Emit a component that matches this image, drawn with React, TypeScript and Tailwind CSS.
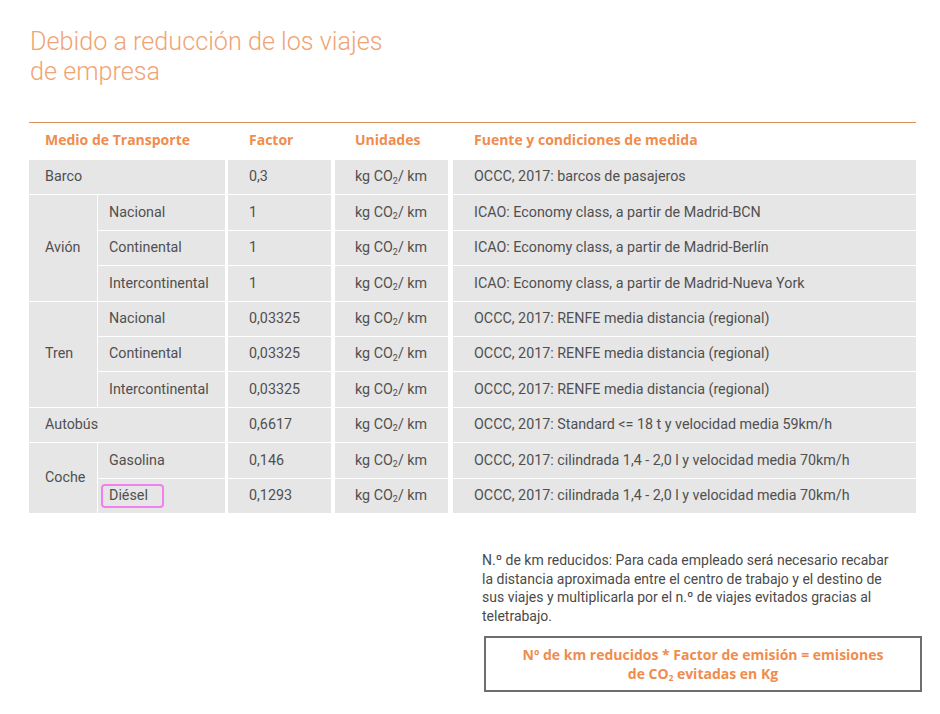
import type { ReactNode } from 'react'

const orange = 'text-[#ef8c4e]'

function Co2() {
  return (
    <span>
      kg CO<sub className="text-[9px]">2</sub>/ km
    </span>
  )
}

function Cell({ className, children }: { className: string; children?: ReactNode }) {
  return <div className={`flex items-center bg-[#e6e6e6] text-[14.3px] text-[#505050] ${className}`}>{children}</div>
}

type Fila = { row: string; factor: string; fuente: string }

const filas: Fila[] = [
  { row: 'row-start-1', factor: '0,3', fuente: 'OCCC, 2017: barcos de pasajeros' },
  { row: 'row-start-2', factor: '1', fuente: 'ICAO: Economy class, a partir de Madrid-BCN' },
  { row: 'row-start-3', factor: '1', fuente: 'ICAO: Economy class, a partir de Madrid-Berlín' },
  { row: 'row-start-4', factor: '1', fuente: 'ICAO: Economy class, a partir de Madrid-Nueva York' },
  { row: 'row-start-5', factor: '0,03325', fuente: 'OCCC, 2017: RENFE media distancia (regional)' },
  { row: 'row-start-6', factor: '0,03325', fuente: 'OCCC, 2017: RENFE media distancia (regional)' },
  { row: 'row-start-7', factor: '0,03325', fuente: 'OCCC, 2017: RENFE media distancia (regional)' },
  { row: 'row-start-8', factor: '0,6617', fuente: 'OCCC, 2017: Standard <= 18 t y velocidad media 59km/h' },
  { row: 'row-start-9', factor: '0,146', fuente: 'OCCC, 2017: cilindrada 1,4 - 2,0 l y velocidad media 70km/h' },
  { row: 'row-start-10', factor: '0,1293', fuente: 'OCCC, 2017: cilindrada 1,4 - 2,0 l y velocidad media 70km/h' },
]

const subs = [
  { row: 'row-start-2', label: 'Nacional' },
  { row: 'row-start-3', label: 'Continental' },
  { row: 'row-start-4', label: 'Intercontinental' },
  { row: 'row-start-5', label: 'Nacional' },
  { row: 'row-start-6', label: 'Continental' },
  { row: 'row-start-7', label: 'Intercontinental' },
  { row: 'row-start-9', label: 'Gasolina' },
]

const cols = 'grid grid-cols-[68px_1px_127px_3px_103px_4px_113px_5px_463px]'

export default function App() {
  return (
    <div className="relative h-[714px] w-[940px] bg-white font-['Roboto',sans-serif]">
      <h1 className="pl-[30px] pt-[27px] text-[25.2px] leading-[30px] font-light text-[#f0a474]">
        Debido a reducción de los viajes
        <br />
        de empresa
      </h1>

      <div className="ml-[29px] mt-[35px] w-[887px]">
        <div
          className={`${cols} h-[38px] items-center border-t border-[#dd8f5a] pb-[4px] font-['Open_Sans',sans-serif] text-[14px] font-bold ${orange}`}
        >
          <div className="col-span-3 col-start-1 pl-4">Medio de Transporte</div>
          <div className="col-start-5 pl-[21px]">Factor</div>
          <div className="col-start-7 pl-5">Unidades</div>
          <div className="col-start-9 pl-[21px]">Fuente y condiciones de medida</div>
        </div>

        <div className={`${cols} grid-rows-[repeat(10,34.4px)] gap-y-px`}>
          <Cell className="col-span-3 col-start-1 row-start-1 pl-4">Barco</Cell>
          <Cell className="col-start-1 row-span-3 row-start-2 pl-4">Avión</Cell>
          <Cell className="col-start-1 row-span-3 row-start-5 pl-4">Tren</Cell>
          <Cell className="col-span-3 col-start-1 row-start-8 pl-4">Autobús</Cell>
          <Cell className="col-start-1 row-span-2 row-start-9 pl-4">Coche</Cell>

          {subs.map((s, i) => (
            <Cell key={i} className={`col-start-3 pl-[11px] ${s.row}`}>
              {s.label}
            </Cell>
          ))}
          <Cell className="relative col-start-3 row-start-10 pl-[11px]">
            Diésel
            <span className="absolute left-[3px] top-[5px] h-[24px] w-[63px] rounded-[4px] border-2 border-[#f27ff0]" />
          </Cell>

          {filas.map((f, i) => (
            <div key={i} className="contents">
              <Cell className={`col-start-5 pl-[21px] ${f.row}`}>{f.factor}</Cell>
              <Cell className={`col-start-7 pl-5 ${f.row}`}>
                <Co2 />
              </Cell>
              <Cell className={`col-start-9 pl-[21px] ${f.row}`}>{f.fuente}</Cell>
            </div>
          ))}
        </div>
      </div>

      <p className="ml-[482px] mt-[38px] whitespace-nowrap text-[14px] leading-[18.7px] text-[#4a4a4a]">
        N.º de km reducidos: Para cada empleado será necesario recabar
        <br />
        la distancia aproximada entre el centro de trabajo y el destino de
        <br />
        sus viajes y multiplicarla por el n.º de viajes evitados gracias al
        <br />
        teletrabajo.
      </p>

      <div
        className={`ml-[484px] mt-[10px] w-[438px] border-2 border-[#6e6e6e] py-[7px] text-center font-['Open_Sans',sans-serif] text-[14px] leading-[19px] font-bold ${orange}`}
      >
        Nº de km reducidos * Factor de emisión = emisiones
        <br />
        de CO<sub className="text-[8px]">2</sub> evitadas en Kg
      </div>
    </div>
  )
}
